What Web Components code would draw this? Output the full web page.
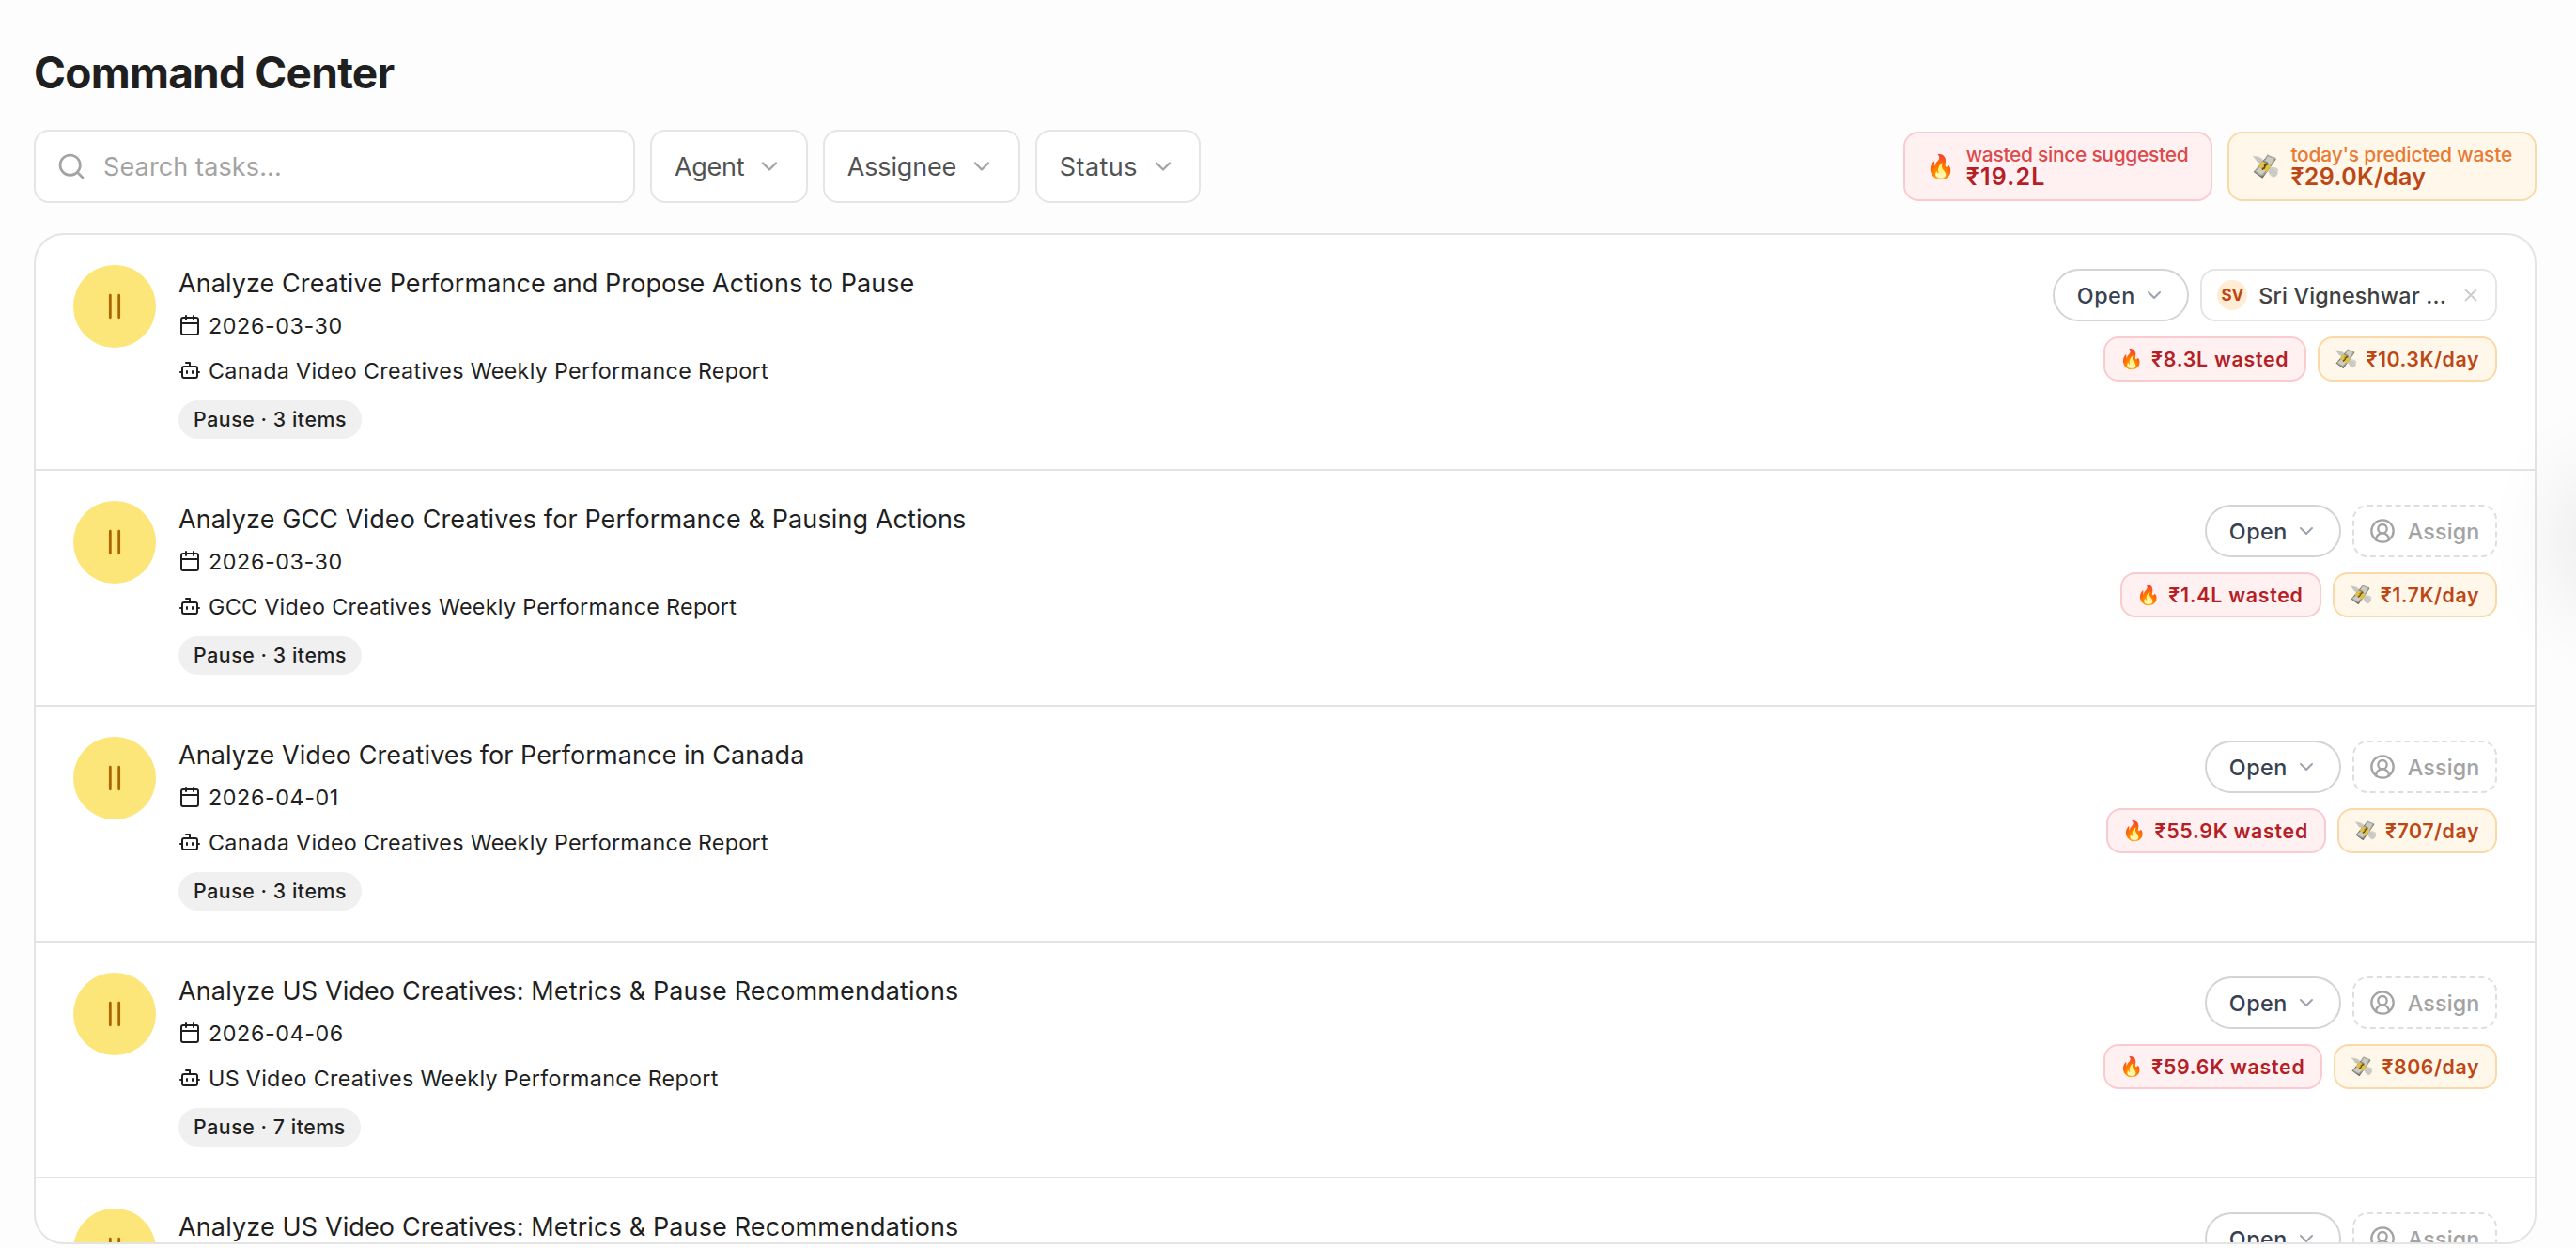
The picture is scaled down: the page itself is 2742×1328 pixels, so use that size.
<!DOCTYPE html>
<html lang="en">
<head>
<meta charset="utf-8">
<title>Command Center</title>
<style>
html,body{margin:0;height:100%;overflow:hidden;background:#fdfdfd}
body{font-family:Inter,"Noto Sans",sans-serif;color:#1f1f1f}
</style>
</head>
<body>
<command-center>
  <page-title slot="head">Command Center</page-title>
  <search-box slot="filters">Search tasks...</search-box>
  <filter-button slot="filters" style="--ls:-.3px">Agent</filter-button>
  <filter-button slot="filters" style="--ls:-.15px">Assignee</filter-button>
  <filter-button slot="filters" style="--ls:.45px">Status</filter-button>
  <stat-box slot="stats" kind="red" label="wasted since suggested" style="--ls:-.32px;--vls:1.2px">₹19.2L</stat-box>
  <stat-box slot="stats" kind="amber" label="today's predicted waste" style="--ls:-.23px;--vls:.4px">₹29.0K/day</stat-box>
  <task-row heading="Analyze Creative Performance and Propose Actions to Pause" date="2026-03-30" agent="Canada Video Creatives Weekly Performance Report" tag="Pause · 3 items">
    <status-pill slot="controls">Open</status-pill>
    <assignee-chip slot="controls" initials="SV">Sri Vigneshwar ...</assignee-chip>
    <cost-chip slot="costs" kind="red">₹8.3L wasted</cost-chip>
    <cost-chip slot="costs" kind="amber">₹10.3K/day</cost-chip>
  </task-row>
  <task-row style="--tls:.1px" heading="Analyze GCC Video Creatives for Performance &amp; Pausing Actions" date="2026-03-30" agent="GCC Video Creatives Weekly Performance Report" tag="Pause · 3 items">
    <status-pill slot="controls">Open</status-pill>
    <assign-button slot="controls">Assign</assign-button>
    <cost-chip slot="costs" kind="red">₹1.4L wasted</cost-chip>
    <cost-chip slot="costs" kind="amber">₹1.7K/day</cost-chip>
  </task-row>
  <task-row heading="Analyze Video Creatives for Performance in Canada" date="2026-04-01" agent="Canada Video Creatives Weekly Performance Report" tag="Pause · 3 items">
    <status-pill slot="controls">Open</status-pill>
    <assign-button slot="controls">Assign</assign-button>
    <cost-chip slot="costs" kind="red">₹55.9K wasted</cost-chip>
    <cost-chip slot="costs" kind="amber">₹707/day</cost-chip>
  </task-row>
  <task-row style="--tls:.13px" heading="Analyze US Video Creatives: Metrics &amp; Pause Recommendations" date="2026-04-06" agent="US Video Creatives Weekly Performance Report" tag="Pause · 7 items">
    <status-pill slot="controls">Open</status-pill>
    <assign-button slot="controls">Assign</assign-button>
    <cost-chip slot="costs" kind="red">₹59.6K wasted</cost-chip>
    <cost-chip slot="costs" kind="amber">₹806/day</cost-chip>
  </task-row>
  <task-row style="--tls:.13px" heading="Analyze US Video Creatives: Metrics &amp; Pause Recommendations">
    <status-pill slot="controls">Open</status-pill>
    <assign-button slot="controls">Assign</assign-button>
  </task-row>
</command-center>
<script>
const define = (name, template) => customElements.define(name, class extends HTMLElement {
  connectedCallback() {
    if (this.shadowRoot) return;
    const root = this.attachShadow({mode: 'open'});
    root.innerHTML = '<style>*{box-sizing:border-box}svg{display:block;flex:none;fill:none;stroke:currentColor;stroke-linecap:round;stroke-linejoin:round}</style>'
      + template(n => (this.getAttribute(n) || '').replace(/&/g, '&amp;'));
  }
});

const svg = (size, body, w = 2) => `<svg width="${size}" height="${size}" viewBox="0 0 24 24" stroke-width="${w}">${body}</svg>`;
const CHEVRON = '<path d="m6 9 6 6 6-6"/>';

const MONEY = s => `<svg width="${s}" height="${s}" viewBox="0 0 32 32" style="stroke:none">
<path d="M15 9C12 5 7 3 1 3.200c.6 1.700 1.800 2.500 3 2.800-.4 1.500.6 2.600 2 2.900-.1 1.400 1 2.300 2.400 2.500.2 1.400 1.600 2.200 3.600 1.800z" fill="#cfcfc9"/>
<path d="M4 6c3 .1 6 1.200 8 3.600M6 9c2 .1 4 .8 5.500 2.300" stroke="#adada5" stroke-width=".7" fill="none"/>
<path d="M21 17c4-1.500 8.500-.6 10.300 3-.7.4-.8 1-.7 1.700.3 1.500-.2 2.500-1.200 3 .3 1.400-.5 2.300-1.900 2.400-.3 1.200-1.600 1.600-2.900 1C21 26.600 19.500 23 19 20z" fill="#d1d1cb"/>
<path d="M22 19.500c3 .3 5.500 1.600 7.400 5M21 22c2.500.6 4.600 2.200 6.200 4.800" stroke="#adada5" stroke-width=".7" fill="none"/>
<path d="M18.500 2.500 28.500 7 12.500 29.500 2 22z" fill="#66665d"/>
<path d="M18.300 1.500C21.500 3.600 25 4.700 28.300 5.200 25 13 19 21.500 12.200 27.200 8.500 26 5 23.800 2.300 21 9 16.500 14.500 9.500 18.300 1.500z" fill="#a2a297"/>
<path d="M18.900 3.600c2.300 1.300 4.600 2.100 7 2.600C22.600 13.300 17.600 20.300 11.700 25.300 9.300 24.300 6.800 22.800 4.600 20.700 10.600 16.300 15.200 10.400 18.900 3.600z" fill="#cdcdc4"/>
<ellipse cx="15" cy="14.500" rx="4.300" ry="5.400" transform="rotate(38 15 14.500)" fill="#85857a"/>
<path d="M12.200 9.300 22.600 15.500 17.700 22 7.600 15.500z" fill="#e3bf42"/>
<path d="M17.700 13.600c-1.700-1.200-3.700.1-2.800 1.700.8 1.400.5 3.300-2.200 2.500M18 12.300l-5.500 7" stroke="#574812" stroke-width="1.300" fill="none"/>
</svg>`;
const emoji = (kind, s) => kind === 'red' ? '<span class="em">🔥</span>' : `<span class="em">${MONEY(s)}</span>`;

const TONES = `
:host([kind=red]){--fg:#b42024;--soft:#dc4a4c;--bg:#fff1f2;--line:#fbcace}
:host([kind=amber]){--fg:#bd4714;--soft:#e97a33;--bg:#fff7ea;--line:#fbd8a8}`;

define('page-title', () => `<style>:host{display:block}
h1{margin:0;font-size:46px;font-weight:700;line-height:58px;letter-spacing:-.76px}</style><h1><slot></slot></h1>`);

define('search-box', () => `<style>:host{display:flex;align-items:center;gap:18px;width:640px;height:78px;box-sizing:border-box;padding:0 22px;
border:2px solid #e5e5e5;border-radius:16px;background:#fff;color:#a3a3a3;font-size:27px;letter-spacing:.13px}</style>
${svg(32, '<circle cx="11" cy="11" r="8"/><path d="m21 21-4.300-4.300"/>')}<slot></slot>`);

define('filter-button', () => `<style>:host{display:flex;align-items:center;gap:13px;height:78px;box-sizing:border-box;padding:0 24px;
border:2px solid #e5e5e5;border-radius:16px;background:#fff;color:#525252;font-size:27px;letter-spacing:var(--ls)}
:host(:not(:last-child)){padding-right:24.500px}
svg{color:#a3a3a3}</style><span><slot></slot></span>${svg(28, CHEVRON)}`);

define('stat-box', a => `<style>${TONES}
:host{display:flex;align-items:center;gap:11px;height:74px;box-sizing:border-box;padding:0 24px 0 22px;border:2px solid var(--line);border-radius:16px;background:var(--bg)}
.em{display:flex;justify-content:center;width:32px;flex:none;font-size:25px;line-height:32px}
.label{font-size:21px;font-weight:500;line-height:23px;letter-spacing:var(--ls);color:var(--soft);white-space:nowrap}
.value{font-size:25px;font-weight:600;line-height:25px;letter-spacing:var(--vls);color:var(--fg)}</style>
${emoji(a('kind'), 29)}<div><div class="label">${a('label')}</div><div class="value"><slot></slot></div></div>`);

define('status-pill', () => `<style>:host{display:flex;align-items:center;gap:8px;height:56px;box-sizing:border-box;padding:0 23.500px 0 24px;border:2px solid #d2d4d8;border-radius:28px;
color:#374151;font-size:23.3px;font-weight:500;letter-spacing:.5px}svg{color:#9ca3af}</style><span><slot></slot></span>${svg(24, CHEVRON)}`);

define('assignee-chip', a => `<style>:host{display:flex;align-items:center;height:56px;box-sizing:border-box;padding:0 15px 0 16px;border:2px solid #e5e5e5;border-radius:16px;
color:#404040;font-size:23.3px;font-weight:500;letter-spacing:.18px;white-space:nowrap}
.avatar{width:32px;height:32px;border-radius:50%;background:#ffedd5;color:#bf440f;font-size:17px;font-weight:700;line-height:32px;text-align:center;letter-spacing:0;margin-right:12px}
svg{color:#ccc;margin-left:15px}</style><span class="avatar">${a('initials')}</span><span><slot></slot></span>${svg(22, '<path d="M18 6 6 18M6 6l12 12"/>')}`);

define('assign-button', () => `<style>:host{display:flex;align-items:center;gap:12.500px;height:56px;box-sizing:border-box;padding:0 16.500px 0 16px;border:2px dashed #dedede;border-radius:16px;
color:#a3a3a3;font-size:23.3px;font-weight:500;letter-spacing:.15px}</style>${svg(28, '<path d="M18 20a6 6 0 0 0-12 0"/><circle cx="12" cy="10" r="4"/><circle cx="12" cy="12" r="10"/>')}<span><slot></slot></span>`);

define('cost-chip', a => `<style>${TONES}
:host{display:flex;align-items:center;gap:8px;height:48px;box-sizing:border-box;padding:0 17px 0 15px;border:2px solid var(--line);border-radius:16px;background:var(--bg);
color:var(--fg);font-size:21.3px;font-weight:600;letter-spacing:.75px;white-space:nowrap}
:host([kind=amber]){letter-spacing:.56px}
.em{display:flex;justify-content:center;width:26px;flex:none;font-size:20.500px;line-height:26px;letter-spacing:0}</style>${emoji(a('kind'), 24)}<span><slot></slot></span>`);

define('task-row', a => `<style>
:host{display:flex;height:251px;flex:none;box-sizing:border-box;padding:0 40px;border-bottom:2px solid #e4e4e4}
.badge{width:88px;height:88px;margin-top:32px;border-radius:50%;background:#fce679;color:#ab6604;display:flex;align-items:center;justify-content:center;flex:none}
.body{flex:1;margin:32px 0 0 24px;display:flex;flex-direction:column;align-items:flex-start}
.title{font-size:27px;line-height:40px;letter-spacing:var(--tls,.075px)}
.meta{display:flex;align-items:center;gap:8px;height:28px;font-size:23.3px;white-space:nowrap}
.date{margin-top:10px;letter-spacing:.6px}
.agent{margin-top:20px;letter-spacing:.31px}
.tag{margin-top:18px;height:41px;line-height:41px;padding:0 16px;border-radius:21px;background:#f0f0f0;font-size:21.3px;font-weight:500;letter-spacing:.56px}
.side{margin-top:36px;display:flex;flex-direction:column;align-items:flex-end;gap:16px}
.line{display:flex;gap:12px}</style>
<div class="badge">${svg(34, '<path d="M8.700 3.700v16.600M15.300 3.700v16.600"/>')}</div>
<div class="body"><div class="title">${a('heading')}</div>
${a('date') && `<div class="meta date">${svg(24, '<path d="M8 2v4M16 2v4M3 10h18"/><rect x="3" y="4" width="18" height="18" rx="2"/>')}<span>${a('date')}</span></div>
<div class="meta agent">${svg(24, '<path d="M12 8V4H8M2 14h2M20 14h2M15 13v2M9 13v2"/><rect x="4" y="8" width="16" height="12" rx="2"/>')}<span>${a('agent')}</span></div>
<div class="tag">${a('tag')}</div>`}</div>
<div class="side"><div class="line"><slot name="controls"></slot></div><div class="line"><slot name="costs"></slot></div></div>`);

define('command-center', () => `<style>
:host{display:flex;flex-direction:column;height:1328px;box-sizing:border-box;padding:48px 42px 4px 36px}
.bar{margin-top:32px;display:flex;align-items:center;justify-content:space-between}
.group{display:flex;gap:16px}
.list{margin-top:32px;flex:1;min-height:0;overflow:hidden;display:flex;flex-direction:column;border:2px solid #e4e4e4;border-radius:32px;background:#fff}
.glow{position:absolute;left:2756px;top:520px;width:40px;height:110px;border-radius:20px;box-shadow:0 0 100px 12px rgba(0,0,0,.14)}
.clip{position:absolute;inset:0;overflow:hidden;pointer-events:none}</style>
<slot name="head"></slot>
<div class="bar"><div class="group"><slot name="filters"></slot></div><div class="group"><slot name="stats"></slot></div></div>
<div class="list"><slot></slot></div>
<div class="clip"><div class="glow"></div></div>`);
</script>
</body>
</html>
